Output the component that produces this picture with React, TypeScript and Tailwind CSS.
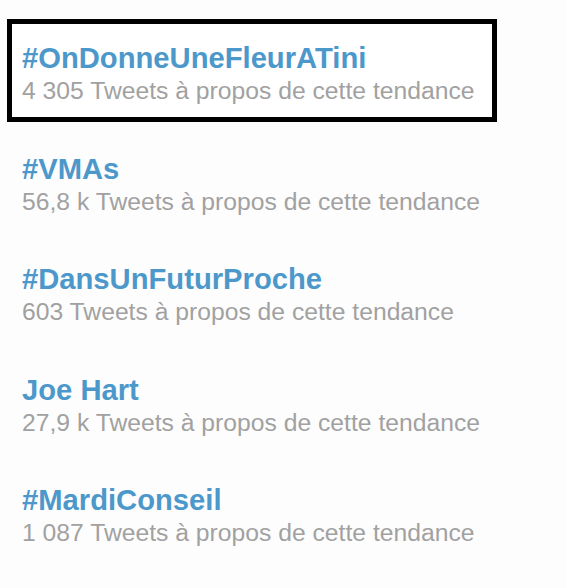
const trends = [
  { name: "#OnDonneUneFleurATini", count: "4 305", boxed: true },
  { name: "#VMAs", count: "56,8 k", boxed: false },
  { name: "#DansUnFuturProche", count: "603", boxed: false },
  { name: "Joe Hart", count: "27,9 k", boxed: false },
  { name: "#MardiConseil", count: "1 087", boxed: false },
];

export default function App() {
  return (
    <div className="min-h-[588px] w-[566px] bg-[#fdfdfd] pt-[19px] pl-[7px] font-['Liberation_Sans',Arial,sans-serif]">
      <ul className="flex w-[490px] flex-col gap-[8px]">
        {trends.map((t) => (
          <li
            key={t.name}
            className={`border-[5px] pt-[17px] pb-[9.5px] pl-[10px] ${
              t.boxed ? "border-black bg-white" : "border-transparent"
            }`}
          >
            <div className="text-[29.2px] leading-[34px] font-bold text-[#4d98cb]">{t.name}</div>
            <div className="text-[24.7px] leading-[32px] text-[#a1a1a1]">
              {t.count} Tweets à propos de cette tendance
            </div>
          </li>
        ))}
      </ul>
    </div>
  );
}
